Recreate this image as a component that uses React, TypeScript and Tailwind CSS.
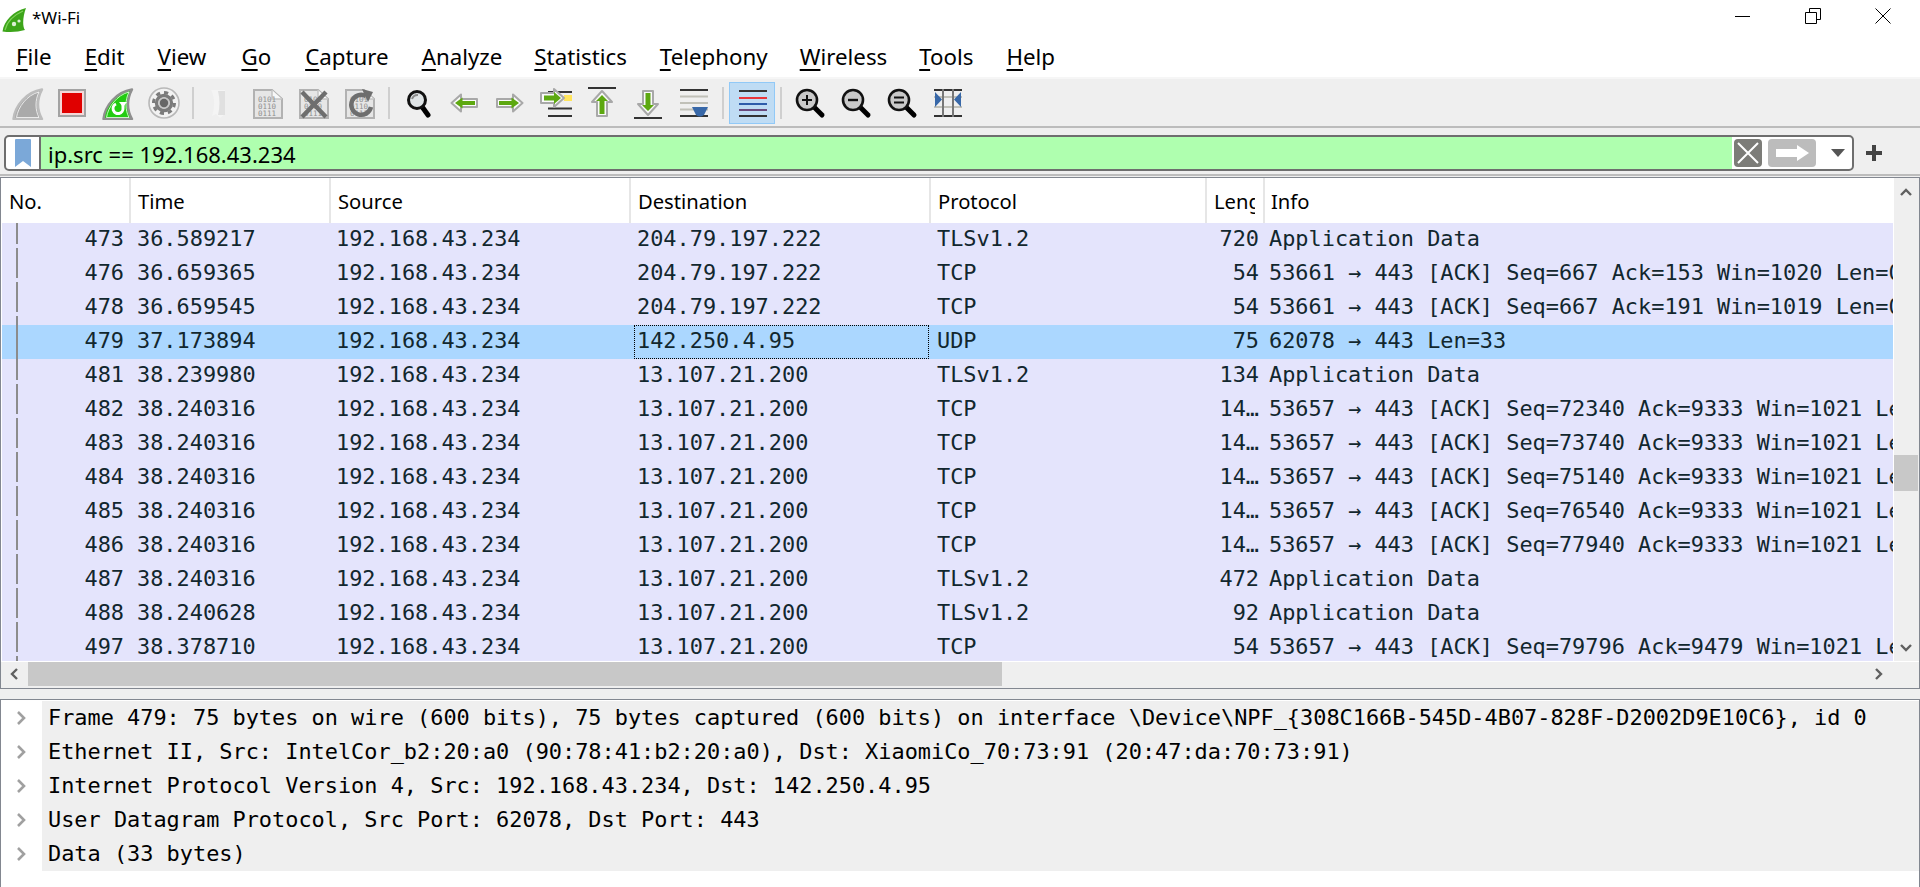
import { ReactNode } from 'react';

const mono = "font-['DejaVu_Sans_Mono',monospace]";

const menus = [
  ['F', 'ile', 'ml-0'],
  ['E', 'dit', 'ml-[33px]'],
  ['V', 'iew', 'ml-[33px]'],
  ['G', 'o', 'ml-[35px]'],
  ['C', 'apture', 'ml-[34px]'],
  ['A', 'nalyze', 'ml-[33px]'],
  ['S', 'tatistics', 'ml-[32px]'],
  ['T', 'elephony', 'ml-[33px]'],
  ['W', 'ireless', 'ml-[32px]'],
  ['T', 'ools', 'ml-[32px]'],
  ['H', 'elp', 'ml-[33px]'],
];

const ack = (seq: number, a: number, win: number) => `53657 → 443 [ACK] Seq=${seq} Ack=${a} Win=${win} Len=1400`;

const rows = [
  ['473', '36.589217', '204.79.197.222', 'TLSv1.2', '720', 'Application Data'],
  ['476', '36.659365', '204.79.197.222', 'TCP', '54', '53661 → 443 [ACK] Seq=667 Ack=153 Win=1020 Len=0'],
  ['478', '36.659545', '204.79.197.222', 'TCP', '54', '53661 → 443 [ACK] Seq=667 Ack=191 Win=1019 Len=0'],
  ['479', '37.173894', '142.250.4.95', 'UDP', '75', '62078 → 443 Len=33'],
  ['481', '38.239980', '13.107.21.200', 'TLSv1.2', '134', 'Application Data'],
  ['482', '38.240316', '13.107.21.200', 'TCP', '14…', ack(72340, 9333, 1021)],
  ['483', '38.240316', '13.107.21.200', 'TCP', '14…', ack(73740, 9333, 1021)],
  ['484', '38.240316', '13.107.21.200', 'TCP', '14…', ack(75140, 9333, 1021)],
  ['485', '38.240316', '13.107.21.200', 'TCP', '14…', ack(76540, 9333, 1021)],
  ['486', '38.240316', '13.107.21.200', 'TCP', '14…', ack(77940, 9333, 1021)],
  ['487', '38.240316', '13.107.21.200', 'TLSv1.2', '472', 'Application Data'],
  ['488', '38.240628', '13.107.21.200', 'TLSv1.2', '92', 'Application Data'],
  ['497', '38.378710', '13.107.21.200', 'TCP', '54', '53657 → 443 [ACK] Seq=79796 Ack=9479 Win=1021 Len=0'],
];

const details = [
  'Frame 479: 75 bytes on wire (600 bits), 75 bytes captured (600 bits) on interface \\Device\\NPF_{308C166B-545D-4B07-828F-D2002D9E10C6}, id 0',
  'Ethernet II, Src: IntelCor_b2:20:a0 (90:78:41:b2:20:a0), Dst: XiaomiCo_70:73:91 (20:47:da:70:73:91)',
  'Internet Protocol Version 4, Src: 192.168.43.234, Dst: 142.250.4.95',
  'User Datagram Protocol, Src Port: 62078, Dst Port: 443',
  'Data (33 bytes)',
];

function Icon({ children, w = 32, h = 32, className = '' }: { children: ReactNode; w?: number; h?: number; className?: string }) {
  return (
    <svg width={w} height={h} viewBox={`0 0 ${w} ${h}`} className={`shrink-0 ${className}`}>
      {children}
    </svg>
  );
}

const finPath = 'M1.5 31 C3 18 14 4 30 1.5 C25 11 25 22 30 31 Z';

const Fin = ({ fill, stroke }: { fill: string; stroke: string }) => (
  <>
    <path d={finPath} fill={fill} stroke={stroke} strokeWidth="2.4" strokeLinejoin="round" />
    <path d="M4.5 29.5 C6 19 15 7 27 4 C23 12 23 22 27 29.5 Z" fill={fill} stroke="#ffffff" strokeOpacity="0.75" strokeWidth="1" />
  </>
);

const FilePage = ({ children }: { children?: ReactNode }) => (
  <>
    <path d="M2 3 H20 L30 12 V31 H2 Z" fill="#e6e6e6" stroke="#b2b2b2" strokeWidth="2" />
    <path d="M20 3 V12 H30" fill="#f8f8f8" stroke="#c4c4c4" strokeWidth="1.5" />
    <text x="6" y="15" fontSize="7.5" fill="#8f8f8f" fontFamily="DejaVu Sans Mono">0101</text>
    <text x="6" y="22" fontSize="7.5" fill="#8f8f8f" fontFamily="DejaVu Sans Mono">0110</text>
    <text x="6" y="29" fontSize="7.5" fill="#8f8f8f" fontFamily="DejaVu Sans Mono">0111</text>
    {children}
  </>
);

const Lens = ({ children }: { children?: ReactNode }) => (
  <>
    <path d="M20 20 L28 28" stroke="#000" strokeWidth="5" strokeLinecap="round" />
    <circle cx="13" cy="13" r="10" fill="#c9c9c9" stroke="#111" strokeWidth="2.6" />
    {children}
  </>
);

function ToolSep() {
  return <div className="h-[32px] bg-[#cfcfcf] mx-[5px] w-[2px] shrink-0" />;
}

function Tool({ children, active }: { children: ReactNode; active?: boolean }) {
  return (
    <div
      className={`w-[46px] h-[42px] shrink-0 flex items-center justify-center border ${
        active ? 'bg-[#bfdcf4] border-[#91c9f7]' : 'border-transparent'
      }`}
    >
      {children}
    </div>
  );
}

function ArrowH({ flip }: { flip?: boolean }) {
  return (
    <Icon w={28} h={20} className={flip ? '-scale-x-100' : ''}>
      <path d="M1.5 10 L11 1.5 V6 H27 V14 H11 V18.5 Z" fill="#fafafa" stroke="#a8a8a8" strokeWidth="2" strokeLinejoin="round" />
      <path d="M5 10 L12.5 4.5 V8 H25 V12 H12.5 V15.5 Z" fill="#5da810" />
    </Icon>
  );
}

function Toolbar() {
  return (
    <div className="h-[51px] shrink-0 bg-[#efefef] border-t-2 border-[#f6f6f6] border-b-2 border-b-[#bcbcbc] flex items-center pl-[3px]">
      <Tool>
        <Icon className="ml-[3px] mt-[3px]"><Fin fill="#aaaaaa" stroke="#bdbdbd" /></Icon>
      </Tool>
      <Tool>
        <Icon w={28} h={28}>
          <rect x="1" y="1" width="26" height="26" fill="#f4d8d8" stroke="#a3a3a3" strokeWidth="2" />
          <rect x="4" y="4" width="20" height="20" fill="#e00000" />
        </Icon>
      </Tool>
      <Tool>
        <Icon className="mt-[3px]">
          <Fin fill="#22cc11" stroke="#8f8f8f" />
          <path d="M21 15 V20 A5 5 0 1 1 14 16" fill="none" stroke="#fff" strokeWidth="3" />
          <path d="M17 14 H25 L21 19 Z" fill="#fff" />
        </Icon>
      </Tool>
      <Tool>
        <Icon>
          <circle cx="16" cy="16" r="15" fill="#f2f2f2" stroke="#b8b8b8" strokeWidth="1.6" />
          <circle cx="16" cy="16" r="10.5" fill="none" stroke="#7b7b7b" strokeWidth="3" strokeDasharray="4.2 4" />
          <circle cx="16" cy="16" r="7.5" fill="none" stroke="#7b7b7b" strokeWidth="3.4" />
          <circle cx="16" cy="16" r="5.8" fill="#c6c6c6" />
          <circle cx="16" cy="16" r="4.2" fill="#666" />
        </Icon>
      </Tool>
      <ToolSep />
      <Tool>
        <Icon>
          <path d="M5 3 H19 V27 L14 31 L10 27 L6 29 C9 20 9 10 5 3 Z" fill="#f4f4f4" />
          <path d="M12 4 H19 V28 H12 C14 20 14 12 12 4 Z" fill="#e0e0e0" />
        </Icon>
      </Tool>
      <Tool><Icon><FilePage /></Icon></Tool>
      <Tool>
        <Icon>
          <FilePage>
            <path d="M4 5 L28 30 M28 5 L4 30" stroke="#6e6e6e" strokeWidth="4.4" />
          </FilePage>
        </Icon>
      </Tool>
      <Tool>
        <Icon>
          <FilePage>
            <path d="M22 9 A10 10 0 1 0 27 20" fill="none" stroke="#6e6e6e" strokeWidth="4.4" />
            <path d="M18 2 L29 5 L24 15 Z" fill="#6e6e6e" />
          </FilePage>
        </Icon>
      </Tool>
      <ToolSep />
      <Tool>
        <Icon>
          <path d="M21 21 L26 28" stroke="#000" strokeWidth="5" strokeLinecap="round" />
          <circle cx="15" cy="13" r="8.5" fill="#dfe4e6" stroke="#111" strokeWidth="3" />
          <path d="M10 12 A6 6 0 0 1 16 8" fill="none" stroke="#8a8a8a" strokeWidth="2" />
        </Icon>
      </Tool>
      <Tool><ArrowH /></Tool>
      <Tool><ArrowH flip /></Tool>
      <Tool>
        <Icon>
          <path d="M8 5 H32 M8 21.5 H32 M8 29 H32" stroke="#333" strokeWidth="2" />
          <rect x="24" y="8" width="8" height="6" fill="#ffe45c" />
          <path d="M24 11 L14 2 V6 H1 V16 H14 V20 Z" fill="#fafafa" stroke="#a8a8a8" strokeWidth="2" strokeLinejoin="round" />
          <path d="M21 11 L14 5 V8.5 H4 V13.5 H14 V17 Z" fill="#5da810" />
        </Icon>
      </Tool>
      <Tool>
        <Icon>
          <path d="M2 1 H30" stroke="#333" strokeWidth="2" />
          <path d="M16 4 L26 15 H21 V29 H11 V15 H6 Z" fill="#fafafa" stroke="#a8a8a8" strokeWidth="2" strokeLinejoin="round" />
          <path d="M16 8 L22 14 H18.5 V27 H13.5 V14 H10 Z" fill="#5da810" />
        </Icon>
      </Tool>
      <Tool>
        <Icon>
          <path d="M2 31 H30" stroke="#333" strokeWidth="2" />
          <path d="M16 28 L26 17 H21 V4 H11 V17 H6 Z" fill="#fafafa" stroke="#a8a8a8" strokeWidth="2" strokeLinejoin="round" />
          <path d="M16 24 L22 18 H18.5 V6 H13.5 V18 H10 Z" fill="#5da810" />
        </Icon>
      </Tool>
      <Tool>
        <Icon>
          <path d="M2 3 H30 M2 29 H30" stroke="#333" strokeWidth="2" />
          <path d="M2 9.5 H30 M2 16 H30 M2 22.5 H30" stroke="#c0c0b8" strokeWidth="2" />
          <path d="M14 20 H30 L26 28 Q22 31 18 28 Z" fill="#3868a8" />
        </Icon>
      </Tool>
      <ToolSep />
      <Tool active>
        <Icon>
          <path d="M3 4 H31 M3 29 H31" stroke="#333" strokeWidth="2" />
          <path d="M3 11 H31" stroke="#e8353a" strokeWidth="2" />
          <path d="M3 17 H31" stroke="#2e5caa" strokeWidth="2" />
          <path d="M3 23 H31" stroke="#6a4a7c" strokeWidth="2" />
        </Icon>
      </Tool>
      <ToolSep />
      <Tool>
        <Icon><Lens><path d="M8 13 H18 M13 8 V18" stroke="#111" strokeWidth="2" /></Lens></Icon>
      </Tool>
      <Tool>
        <Icon><Lens><path d="M8 13 H18" stroke="#111" strokeWidth="2.4" /></Lens></Icon>
      </Tool>
      <Tool>
        <Icon><Lens><path d="M8 10.5 H18 M8 15.5 H18" stroke="#111" strokeWidth="2.2" /></Lens></Icon>
      </Tool>
      <Tool>
        <Icon>
          <path d="M2 3 H30 M2 29 H30" stroke="#333" strokeWidth="2" />
          <path d="M2 10 H30 M2 20 H30" stroke="#c0c0b8" strokeWidth="2" />
          <path d="M11 2 V30 M21 2 V30" stroke="#777" strokeWidth="2" />
          <path d="M3 5 L10 12.5 L3 20 Z M29 5 L22 12.5 L29 20 Z" fill="#3868a8" />
        </Icon>
      </Tool>
    </div>
  );
}

function FilterBar() {
  return (
    <div className="h-[48px] shrink-0 bg-[#efefef] border-b-2 border-[#bcbcbc] flex items-start pt-[7px] pl-[4px] pr-[38px]">
      <div className="flex-1 h-[36px] bg-white border-2 border-[#6e6e6e] rounded-[5px] flex items-stretch overflow-hidden">
        <div className="w-[35px] shrink-0 flex items-center justify-center border-r-2 border-[#6e6e6e]">
          <svg width="16" height="28" viewBox="0 0 16 28">
            <path d="M0 1 Q0 0 1 0 H15 Q16 0 16 1 V28 L8 22 L0 28 Z" fill="#7ba8d8" />
          </svg>
        </div>
        <div className="flex-1 bg-[#afffaf] flex items-center pl-[7px] pt-[3px] text-[22px] text-black">
          ip.src == 192.168.43.234
        </div>
        <div className="flex items-center pl-[2px] w-[120px] shrink-0">
          <svg width="28" height="28" viewBox="0 0 28 28" className="shrink-0">
            <rect width="28" height="28" rx="4" fill="#7c7c78" />
            <path d="M4 4 L24 24 M24 4 L4 24" stroke="#fff" strokeWidth="2" />
          </svg>
          <svg width="48" height="28" viewBox="0 0 48 28" className="ml-[6px] shrink-0">
            <rect width="48" height="28" rx="4" fill="#bcbcbc" />
            <path d="M8 10 H29 V6 L41 14 L29 22 V18 H8 Z" fill="#fff" />
          </svg>
          <svg width="14" height="8" viewBox="0 0 14 8" className="ml-[15px] shrink-0">
            <path d="M0 0 H14 L7 8 Z" fill="#555" />
          </svg>
        </div>
      </div>
      <svg width="16" height="16" viewBox="0 0 16 16" className="ml-[12px] mt-[10px] shrink-0">
        <path d="M8 0 V16 M0 8 H16" stroke="#444" strokeWidth="4" />
      </svg>
    </div>
  );
}

const colClass = [
  'w-[129px]',
  'w-[200px]',
  'w-[300px]',
  'w-[300px]',
  'w-[276px]',
  'w-[58px]',
];

const headers = ['No.', 'Time', 'Source', 'Destination', 'Protocol', 'Leng'];

function Chevron({ dir }: { dir: 'up' | 'down' | 'left' | 'right' }) {
  const d = {
    up: 'M1 8 L6 3 L11 8',
    down: 'M1 3 L6 8 L11 3',
    left: 'M8 1 L3 6 L8 11',
    right: 'M3 1 L8 6 L3 11',
  }[dir];
  return (
    <svg width="12" height="12" viewBox="0 0 12 12">
      <path d={d} fill="none" stroke="#606060" strokeWidth="2.4" />
    </svg>
  );
}

function PacketRow({ row }: { row: string[] }) {
  const selected = row[0] === '479';
  return (
    <div className={`h-[34px] shrink-0 flex relative text-[#12272e] ${selected ? 'bg-[#abd7ff]' : 'bg-[#e4e4fc]'}`}>
      <div className="absolute left-[14px] top-0 bottom-0 w-[2px] bg-[#8c8c8c]" />
      {!selected && <div className="absolute left-[14px] top-[21px] h-[4px] w-[2px] bg-[#e4e4fc]" />}
      <div className={`${colClass[0]} shrink-0 text-right pr-[7px]`}>{row[0]}</div>
      <div className={`${colClass[1]} shrink-0 pl-[6px]`}>{row[1]}</div>
      <div className={`${colClass[2]} shrink-0 pl-[5px]`}>192.168.43.234</div>
      <div className={`${colClass[3]} shrink-0 pl-[6px] relative`}>
        {row[2]}
        {selected && <div className="absolute inset-0 left-[3px] right-[2px] border border-dotted border-black" />}
      </div>
      <div className={`${colClass[4]} shrink-0 pl-[6px]`}>{row[3]}</div>
      <div className={`${colClass[5]} shrink-0 text-right pr-[6px] whitespace-nowrap`}>{row[4]}</div>
      <div className="flex-1 min-w-0 pl-[4px] overflow-hidden whitespace-nowrap">{row[5]}</div>
    </div>
  );
}

function PacketList() {
  return (
    <div className="h-[512px] shrink-0 border border-[#828790] mt-[1px] flex flex-col overflow-hidden bg-white">
      <div className="flex-1 min-h-0 flex">
        <div className="flex-1 min-w-0 flex flex-col overflow-hidden pl-[1px]">
          <div className="h-[45px] shrink-0 flex bg-white text-[20.2px] text-black leading-[47px]">
            {headers.map((h, i) => (
              <div key={h} className={`${colClass[i]} shrink-0 pl-[7px] border-r-2 border-[#e6e6e6] overflow-hidden`}>
                <div className={i === 5 ? 'w-[41px] overflow-hidden whitespace-nowrap' : 'whitespace-nowrap'}>{h}</div>
              </div>
            ))}
            <div className="flex-1 pl-[6px]">Info</div>
          </div>
          <div className={`flex-1 min-h-0 overflow-hidden flex flex-col text-[21.9px] leading-[31px] ${mono}`}>
            {rows.map((r) => (
              <PacketRow key={r[0]} row={r} />
            ))}
          </div>
        </div>
        <div className="w-[26px] shrink-0 bg-[#efefef] flex flex-col items-center border-l border-white pr-[1px]">
          <div className="h-[30px] flex items-center"><Chevron dir="up" /></div>
          <div className="flex-1 w-full relative">
            <div className="absolute left-0 right-0 top-[247px] h-[36px] bg-[#c8c8c8]" />
          </div>
          <div className="h-[26px] flex items-center"><Chevron dir="down" /></div>
        </div>
      </div>
      <div className="h-[27px] shrink-0 bg-[#efefef] border-t border-white pb-[2px] flex items-center">
        <div className="w-[27px] shrink-0 flex justify-center"><Chevron dir="left" /></div>
        <div className="w-[974px] h-full bg-[#c8c8c8]" />
        <div className="flex-1" />
        <div className="w-[52px] flex justify-start pl-[6px]"><Chevron dir="right" /></div>
      </div>
    </div>
  );
}

function DetailPane() {
  return (
    <div className="border-t border-x border-[#828790] mt-[10px] bg-white flex-1 pl-[1px] pt-[1px]">
      <div className={`text-[21.9px] leading-[33px] text-black ${mono}`}>
        {details.map((d) => (
          <div key={d} className="flex h-[34px]">
            <div className="w-[40px] shrink-0 flex items-center justify-center">
              <svg width="12" height="14" viewBox="0 0 12 14">
                <path d="M2 1 L8 7 L2 13" fill="none" stroke="#a0a0a0" strokeWidth="2.6" />
              </svg>
            </div>
            <div className="flex-1 bg-[#efefef] pl-[6px] whitespace-nowrap overflow-hidden">{d}</div>
          </div>
        ))}
      </div>
    </div>
  );
}

export default function App() {
  return (
    <div className="w-[1920px] h-[887px] overflow-hidden bg-[#efefef] flex flex-col font-['Noto_Sans',sans-serif]">
      <div className="h-[36px] bg-white flex items-center shrink-0">
        <svg width="24" height="24" viewBox="0 0 24 24" className="ml-[2px] mt-[4px]">
          <path d="M0.5 23.5 C2 13 11 3 24 0 C21 8 20 18 23 22 Q13 25 0.5 23.5 Z" fill="#3da51a" />
          <path d="M3 22 C5 13 12 7 21 3" fill="none" stroke="#7fd25a" strokeWidth="1.2" />
          <circle cx="12" cy="16" r="2.2" fill="#dcefd4" />
          <circle cx="17" cy="13" r="1.6" fill="#dcefd4" />
        </svg>
        <span className="ml-[6px] text-[17px] text-black">*Wi-Fi</span>
        <div className="flex-1" />
        <div className="flex items-center mb-[4px]">
          <div className="w-[15px] h-px bg-black mr-[55px]" />
          <svg width="16" height="16" viewBox="0 0 16 16" className="mr-[54px]">
            <path d="M0.5 4.5 H11.5 V15.5 H0.5 Z M4.5 4.5 V0.5 H15.5 V11.5 H11.5" fill="none" stroke="#000" />
          </svg>
          <svg width="16" height="16" viewBox="0 0 16 16" className="mr-[29px]">
            <path d="M0.5 0.5 L15.5 15.5 M15.5 0.5 L0.5 15.5" stroke="#000" />
          </svg>
        </div>
      </div>
      <div className="h-[41px] bg-white flex items-center shrink-0 pl-[16px] text-[22.3px] text-black">
        {menus.map(([k, rest, gap], i) => (
          <span key={i} className={gap}>
            <span className="underline decoration-2 underline-offset-[4px]">{k}</span>
            {rest}
          </span>
        ))}
      </div>
      <Toolbar />
      <FilterBar />
      <PacketList />
      <DetailPane />
    </div>
  );
}
